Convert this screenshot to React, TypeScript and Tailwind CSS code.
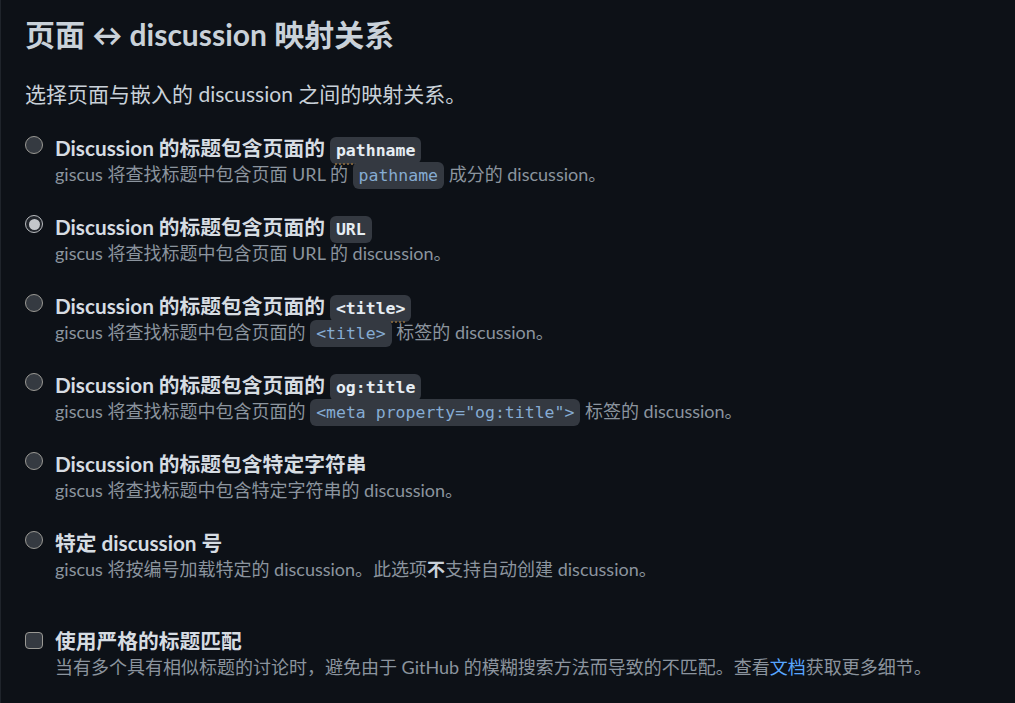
import type { ReactNode } from "react";

const SANS = "font-['Lato','Noto_Sans_CJK_SC',sans-serif]";

type Option = {
  title: ReactNode;
  desc: ReactNode;
  checked?: boolean;
};

function TitleCode({ children, plain }: { children: ReactNode; plain?: boolean }) {
  return (
    <code
      className={
        plain
          ? "rounded-md bg-[#343941] px-[6px] py-[4px] font-['DejaVu_Sans_Mono',monospace] text-[16.5px] leading-none font-bold text-[#e6edf3]"
          : "rounded-md bg-[#343941] px-[6px] py-[4px] font-['DejaVu_Sans_Mono',monospace] text-[16.5px] leading-none font-bold text-[#e6edf3] underline decoration-dotted decoration-[#8a6a3c] underline-offset-[8px]"
      }
    >
      {children}
    </code>
  );
}

function DescCode({ children }: { children: ReactNode }) {
  return (
    <code className="rounded-md bg-[#343941] px-[6px] py-[4px] font-['DejaVu_Sans_Mono',monospace] text-[16.5px] leading-none text-[#86acd3]">
      {children}
    </code>
  );
}

const OPTIONS: Option[] = [
  {
    title: (
      <>
        Discussion 的标题包含页面的 <TitleCode>pathname</TitleCode>
      </>
    ),
    desc: (
      <>
        giscus 将查找标题中包含页面 URL 的 <DescCode>pathname</DescCode> 成分的 discussion。
      </>
    ),
  },
  {
    title: (
      <>
        Discussion 的标题包含页面的 <TitleCode plain>URL</TitleCode>
      </>
    ),
    desc: <>giscus 将查找标题中包含页面 URL 的 discussion。</>,
    checked: true,
  },
  {
    title: (
      <>
        Discussion 的标题包含页面的 <TitleCode>{"<title>"}</TitleCode>
      </>
    ),
    desc: (
      <>
        giscus 将查找标题中包含页面的 <DescCode>{"<title>"}</DescCode> 标签的 discussion。
      </>
    ),
  },
  {
    title: (
      <>
        Discussion 的标题包含页面的 <TitleCode>og:title</TitleCode>
      </>
    ),
    desc: (
      <>
        giscus 将查找标题中包含页面的 <DescCode>{'<meta property="og:title">'}</DescCode> 标签的 discussion。
      </>
    ),
  },
  {
    title: <>Discussion 的标题包含特定字符串</>,
    desc: <>giscus 将查找标题中包含特定字符串的 discussion。</>,
  },
  {
    title: <>特定 discussion 号</>,
    desc: (
      <>
        giscus 将按编号加载特定的 discussion。此选项<strong className="font-bold text-[#c9d1d9]">不</strong>支持自动创建 discussion。
      </>
    ),
  },
];

function Radio({ checked }: { checked?: boolean }) {
  if (checked) {
    return (
      <span className="mt-[1px] flex h-[18px] w-[18px] shrink-0 items-center justify-center rounded-full border-[1.5px] border-[#b9bcc0] bg-[#22262c]">
        <span className="h-[11px] w-[11px] rounded-full bg-[#c4c7cb]" />
      </span>
    );
  }
  return (
    <span className="mt-[1px] h-[18px] w-[18px] shrink-0 rounded-full border border-[#9a9994] bg-[#353a41]" />
  );
}

export default function App() {
  return (
    <div
      className={`min-h-[703px] w-full border-l border-[#1f242b] bg-[#0d1117] px-[24px] pt-[16px] text-[#c9d1d9] ${SANS}`}
    >
      <h2 className="text-[30px] font-bold leading-[36px] text-[#c9d1d9]">
        页面 ↔ discussion 映射关系
      </h2>
      <p className="mt-[27px] text-[21px] leading-[30px]">
        选择页面与嵌入的 discussion 之间的映射关系。
      </p>

      <div className="mt-[26px] flex flex-col gap-[27px]">
        {OPTIONS.map((opt, i) => (
          <label key={i} className="flex items-start gap-[12px]">
            <Radio checked={opt.checked} />
            <div className="flex flex-col">
              <span className="text-[20.75px] font-bold leading-[26px] text-[#d6dce2]">
                {opt.title}
              </span>
              <span className="text-[18px] leading-[26px] text-[#8b949e]">
                {opt.desc}
              </span>
            </div>
          </label>
        ))}
      </div>

      <label className="mt-[46px] flex items-start gap-[12px]">
        <span className="mt-[4px] h-[17px] w-[18px] shrink-0 rounded-[4px] border border-[#9a9994] bg-[#353a41]" />
        <div className="flex flex-col">
          <span className="text-[20.75px] font-bold leading-[26px] text-[#d6dce2]">
            使用严格的标题匹配
          </span>
          <span className="text-[18px] leading-[26px] text-[#8b949e]">
            当有多个具有相似标题的讨论时，避免由于 GitHub 的模糊搜索方法而导致的不匹配。查看
            <a className="text-[#58a6ff]">文档</a>
            获取更多细节。
          </span>
        </div>
      </label>
    </div>
  );
}
